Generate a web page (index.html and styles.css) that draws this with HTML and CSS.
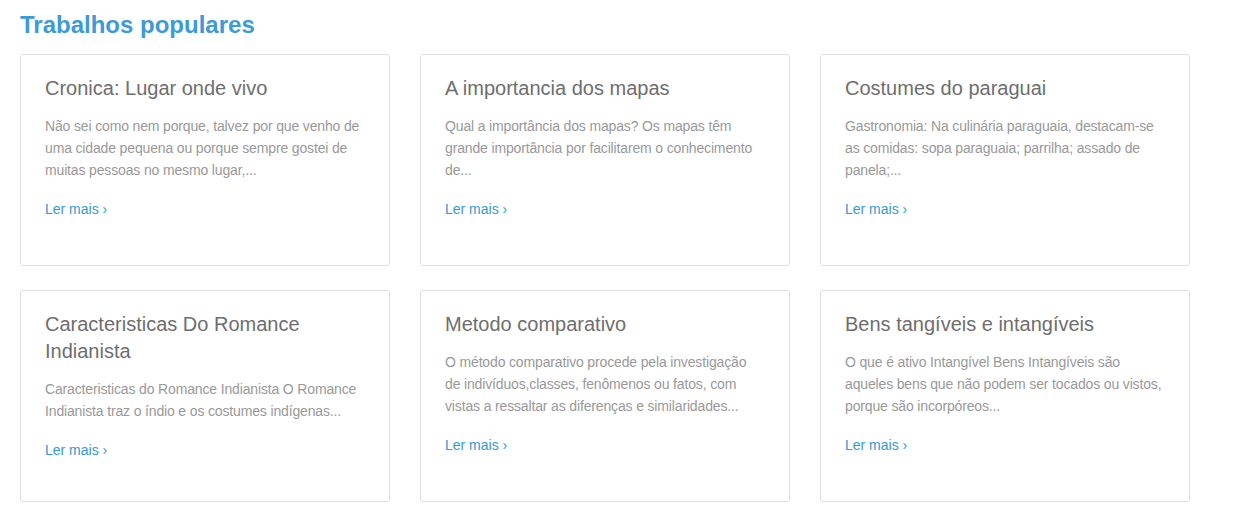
FILE: index.html
```html
<!DOCTYPE html>
<html lang="pt">
<head>
<meta charset="utf-8">
<title>Trabalhos populares</title>
<link rel="stylesheet" href="styles.css">
</head>
<body>
<section class="popular">
  <h2 class="popular-title">Trabalhos populares</h2>
  <div class="grid">
    <article class="card">
      <h3 class="card-title">Cronica: Lugar onde vivo</h3>
      <p class="card-text">Não sei como nem porque, talvez por que venho de<br>uma cidade pequena ou porque sempre gostei de<br>muitas pessoas no mesmo lugar,...</p>
      <a class="card-link" href="#">Ler mais ›</a>
    </article>
    <article class="card">
      <h3 class="card-title">A importancia dos mapas</h3>
      <p class="card-text">Qual a importância dos mapas? Os mapas têm<br>grande importância por facilitarem o conhecimento<br>de...</p>
      <a class="card-link" href="#">Ler mais ›</a>
    </article>
    <article class="card">
      <h3 class="card-title">Costumes do paraguai</h3>
      <p class="card-text">Gastronomia: Na culinária paraguaia, destacam-se<br>as comidas: sopa paraguaia; parrilha; assado de<br>panela;...</p>
      <a class="card-link" href="#">Ler mais ›</a>
    </article>
    <article class="card">
      <h3 class="card-title">Caracteristicas Do Romance Indianista</h3>
      <p class="card-text">Caracteristicas do Romance Indianista O Romance<br>Indianista traz o índio e os costumes indígenas...</p>
      <a class="card-link" href="#">Ler mais ›</a>
    </article>
    <article class="card">
      <h3 class="card-title">Metodo comparativo</h3>
      <p class="card-text">O método comparativo procede pela investigação<br>de indivíduos,classes, fenômenos ou fatos, com<br>vistas a ressaltar as diferenças e similaridades...</p>
      <a class="card-link" href="#">Ler mais ›</a>
    </article>
    <article class="card">
      <h3 class="card-title">Bens tangíveis e intangíveis</h3>
      <p class="card-text">O que é ativo Intangível Bens Intangíveis são<br>aqueles bens que não podem ser tocados ou vistos,<br>porque são incorpóreos...</p>
      <a class="card-link" href="#">Ler mais ›</a>
    </article>
  </div>
</section>
</body>
</html>
```

FILE: styles.css
```css
html, body {
  margin: 0;
  padding: 0;
  background: #fff;
}
body {
  font-family: "Liberation Sans", Arial, sans-serif;
}
.popular {
  padding: 10px 20px 0 20px;
}
.popular-title {
  margin: 0 0 14px 0;
  font-size: 24px;
  line-height: 30px;
  font-weight: bold;
  color: #3d9ad9;
}
.grid {
  display: grid;
  grid-template-columns: repeat(3, 370px);
  column-gap: 30px;
  row-gap: 24px;
}
.card {
  box-sizing: border-box;
  height: 212px;
  border: 1px solid #e0e0e0;
  border-radius: 3px;
  padding: 20px 24px 0 24px;
  display: flex;
  flex-direction: column;
  align-items: flex-start;
}
.card-title {
  margin: 0;
  font-size: 20px;
  line-height: 27px;
  font-weight: normal;
  color: #6e6e6e;
}
.card-text {
  margin: 13px 0 0 0;
  font-size: 14px;
  line-height: 22px;
  letter-spacing: -0.15px;
  white-space: nowrap;
  color: #999;
}
.card-link {
  margin-top: 17px;
  font-size: 14px;
  line-height: 22px;
  color: #3498db;
  text-decoration: none;
}
```
